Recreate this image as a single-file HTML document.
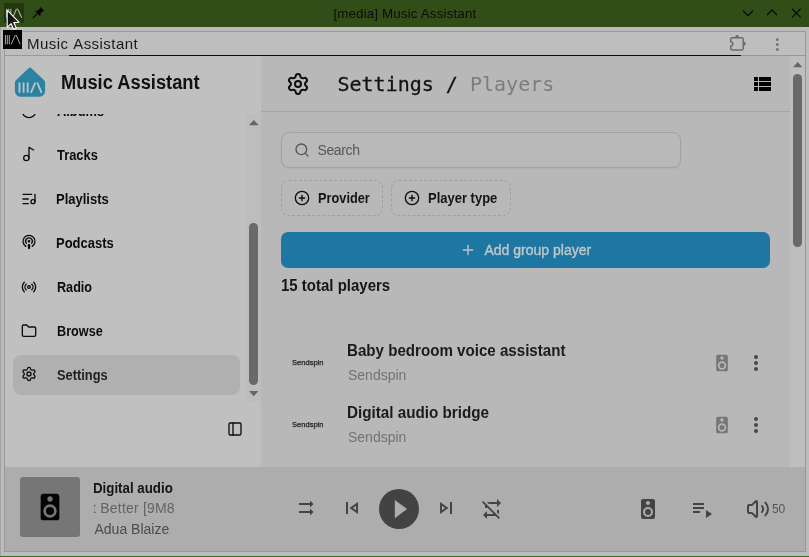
<!DOCTYPE html>
<html lang="en">
<head>
<meta charset="utf-8">
<title>[media] Music Assistant</title>
<style>
*{box-sizing:border-box;margin:0;padding:0}
html,body{width:809px;height:557px;overflow:hidden;background:#bcbcbc}
body{position:relative;font-family:"Liberation Sans",sans-serif;color:#151515}
#root{position:absolute;left:0;top:0;width:809px;height:557px;overflow:hidden;will-change:transform}
.abs{position:absolute}
.t{position:absolute;white-space:pre;line-height:20px}
svg{position:absolute;overflow:visible}
.lu{fill:none;stroke:#0d0d0d;stroke-width:2;stroke-linecap:round;stroke-linejoin:round}
.md{-webkit-text-stroke:0.35px currentColor}
/* title bar */
#titlebar{left:0;top:0;width:809px;height:27px;background:#314d18}
/* window frame */
#frameL{left:0;top:27px;width:1px;height:530px;background:#a2a0a0}
#frame{left:4px;top:31px;width:802px;height:521px;border:1px solid #9b9797}
#toolbar{left:5px;top:32px;width:800px;height:23px;background:#bebebe}
#tbline{left:5px;top:55px;width:800px;height:1px;background:#9b9797}
#tbblack{left:69px;top:54.6px;width:672px;height:1.5px;background:#0c0c0c}
#green{left:0;top:555.6px;width:809px;height:1.4px;background:#3f6a1e}
/* app */
#sidebar{left:5px;top:56px;width:256px;height:411px;background:#c0c0c0}
#main{left:261px;top:56px;width:529px;height:411px;background:#b8b8b8}
#mscroll{left:790px;top:56px;width:15px;height:411px;background:#bebebe}
#player{left:5px;top:467px;width:800px;height:84px;background:#adadad}
.nav{position:absolute;left:57px;font-size:14px;line-height:20px;white-space:pre}
.nb{font-weight:700;font-size:15px;color:#0c0c0c}
.sx{transform-origin:0 50%}
</style>
</head>
<body>
<div id="root">
<!-- ===== title bar ===== -->
<div id="titlebar" class="abs"></div>
<div class="abs" style="left:4px;top:3px;width:20px;height:20px;background:#223711"></div>
<svg style="left:4px;top:3px" width="20" height="20" viewBox="0 0 20 20"><g stroke="#a5b796" stroke-width="1.100" fill="none"><path d="M2.600 5.800v9M4.700 5.800v9M6.800 5.800v9M8.700 14.800l3.800-9M13.500 5.800l4.300 9"/></g></svg>
<svg style="left:32px;top:6px" width="13" height="13" viewBox="0 0 13 13"><g fill="#050505" stroke="none"><path d="M8.3 0.9l3.8 3.8-1 .9-.5-.3-2.2 2.2.4 1.5-.9.9L3.3 5.300l.9-.9 1.500.4 2.200-2.200-.3-.5z"/><path d="M4.9 7.300l.8.8-4.300 4.300-.8-.8z"/></g></svg>
<div class="t" id="wtitle" style="left:333.400px;top:4px;font-size:13.33px;letter-spacing:0.16px;color:#0b0d08">[media] Music Assistant</div>
<svg style="left:740px;top:5px" width="66" height="17" viewBox="740 5 66 17"><g fill="none" stroke="#080a06" stroke-width="1.25"><path d="M743 10.700l5 5 5-5"/><path d="M767 15l5-5 5 5"/><path d="M792 8.800l8.600 8.600M800.600 8.800l-8.600 8.600"/></g></svg>

<!-- ===== window frame + toolbar ===== -->
<div id="frameL" class="abs"></div>
<div id="frame" class="abs"></div>
<div id="toolbar" class="abs"></div>
<div id="tbline" class="abs"></div>
<div id="tbblack" class="abs"></div>
<div id="green" class="abs"></div>
<div class="abs" style="left:3px;top:30px;width:19px;height:19px;background:#000"></div>
<svg style="left:3px;top:30px" width="19" height="19" viewBox="0 0 19 19"><g stroke="#d8d8d8" stroke-width="0.8" fill="none"><path d="M2.400 5v9.300M4.300 5v9.300M6.300 5v9.300M8.100 14.300l4.300-9.300M13.100 5l4 9.300"/></g></svg>
<div class="t" id="tbtitle" style="left:27px;top:33.500px;font-size:15px;letter-spacing:0.45px;word-spacing:1px;color:#1c1c1c">Music Assistant</div>
<svg style="left:728px;top:34px" width="20" height="18" viewBox="728 34 20 18"><path d="M732.200 37.700H741.700a1.500 1.500 0 0 1 1.500 1.500V48.500a1.500 1.500 0 0 1-1.500 1.500H732.200a1.500 1.500 0 0 1-1.500-1.500V45.900a2.100 2.100 0 0 0 0-4.200V39.200a1.500 1.500 0 0 1 1.500-1.500z" fill="none" stroke="#6b6b6b" stroke-width="1.500" stroke-linejoin="round"/><path d="M735.200 37.500a1.900 2.400 0 0 1 3.800 0zM743.500 41.800a2.300 2 0 0 1 0 4z" fill="#6b6b6b"/></svg>
<svg style="left:774px;top:36px" width="6" height="16" viewBox="774 36 6 16"><g fill="#757575"><circle cx="777.300" cy="39.500" r="1.500"/><circle cx="777.300" cy="44.500" r="1.500"/><circle cx="777.300" cy="49.500" r="1.500"/></g></svg>

<!-- ===== panels ===== -->
<div id="sidebar" class="abs"></div>
<div id="main" class="abs"></div>
<div id="mscroll" class="abs"></div>
<div id="player" class="abs"></div>

<!-- ===== sidebar ===== -->
<svg style="left:14px;top:66px" width="32" height="32" viewBox="14 66 32 32"><path d="M28.600 68.200a2 2 0 0 1 2.800 0l12.500 11.800a4 4 0 0 1 1.200 2.900v8.300a5.500 5.500 0 0 1-5.500 5.500h-19.200a5.500 5.500 0 0 1-5.500-5.500v-8.300a4 4 0 0 1 1.200-2.900z" fill="#2c83a1"/><g stroke="#bcc6ca" stroke-width="1.800" fill="none"><path d="M19.500 82.500v10.300M23.600 82.500v10.300M27.700 82.500v10.300M30.900 92.800l4.400-10.300M37.200 82.500l4.400 10.300"/></g></svg>
<div class="t sx" id="sbtitle" style="left:60.500px;top:71.900px;font-size:20px;font-weight:700;transform:scaleX(0.915);color:#111">Music Assistant</div>

<div class="abs" id="sbscroll" style="left:5px;top:111px;width:256px;height:291px;overflow:hidden;clip-path:inset(3px 0 0 0)">
  <div class="abs" style="left:241px;top:3px;width:15px;height:288px;background:#bdbdbd"></div>
  <svg style="left:243.500px;top:8.800px" width="10" height="6" viewBox="0 0 10 6"><path d="M0 5.300L4.800 0l4.800 5.300z" fill="#666"/></svg>
  <div class="abs" style="left:244px;top:112px;width:9px;height:162px;border-radius:4.500px;background:#696969"></div>
  <svg style="left:243.800px;top:279.800px" width="10" height="6" viewBox="0 0 10 6"><path d="M0 0h9.400L4.700 5.200z" fill="#666"/></svg>
  <div class="abs" style="left:8px;top:244px;width:227px;height:40px;border-radius:8px;background:#b0b0b0"></div>
  <!-- albums (clipped) -->
  <svg style="left:16.200px;top:-8.400px" width="16" height="16" viewBox="0 0 24 24" class="lu"><circle cx="12" cy="12" r="10"/><circle cx="12" cy="12" r="2"/></svg>
  <div class="nav nb sx" style="top:-10px;left:52px;transform:scaleX(0.855)">Albums</div>
  <!-- tracks -->
  <svg style="left:16.200px;top:35.400px" width="16" height="16" viewBox="0 0 24 24" class="lu"><circle cx="8" cy="18" r="4"/><path d="M12 18V2l7 4"/></svg>
  <div class="nav nb sx" style="top:34px;left:52px;transform:scaleX(0.860)">Tracks</div>
  <!-- playlists -->
  <svg style="left:16.200px;top:79.500px" width="16" height="16" viewBox="0 0 24 24" class="lu"><path d="M16 5H3"/><path d="M11 12H3"/><path d="M11 19H3"/><path d="M21 16V5"/><circle cx="18" cy="16" r="3"/></svg>
  <div class="nav nb sx" style="top:78px;left:51.300px;transform:scaleX(0.866)">Playlists</div>
  <!-- podcasts -->
  <svg style="left:16.200px;top:123.400px" width="16" height="16" viewBox="0 0 24 24" class="lu"><path d="M16.850 18.580a9 9 0 1 0-9.700 0"/><path d="M8 14a5 5 0 1 1 8 0"/><circle cx="12" cy="11" r="1"/><path d="M13 17a1 1 0 1 0-2 0l.5 4.500a.5.5 0 1 0 1 0Z"/></svg>
  <div class="nav nb sx" style="top:122px;left:51.300px;transform:scaleX(0.866)">Podcasts</div>
  <!-- radio -->
  <svg style="left:16.200px;top:167.500px" width="16" height="16" viewBox="0 0 24 24" class="lu"><path d="M16.247 7.761a6 6 0 0 1 0 8.478"/><path d="M19.075 4.933a10 10 0 0 1 0 14.134"/><path d="M4.925 19.067a10 10 0 0 1 0-14.134"/><path d="M7.753 16.239a6 6 0 0 1 0-8.478"/><circle cx="12" cy="12" r="2"/></svg>
  <div class="nav nb sx" style="top:166px;left:52px;transform:scaleX(0.842)">Radio</div>
  <!-- browse -->
  <svg style="left:16.200px;top:211.500px" width="16" height="16" viewBox="0 0 24 24" class="lu"><path d="M20 20a2 2 0 0 0 2-2V8a2 2 0 0 0-2-2h-7.900a2 2 0 0 1-1.690-.9L9.600 3.900A2 2 0 0 0 7.930 3H4a2 2 0 0 0-2 2v13a2 2 0 0 0 2 2Z"/></svg>
  <div class="nav nb sx" style="top:210px;left:52px;transform:scaleX(0.845)">Browse</div>
  <!-- settings -->
  <svg style="left:16.200px;top:255px" width="16" height="16" viewBox="0 0 24 24" class="lu"><path d="M9.671 4.136a2.340 2.340 0 0 1 4.659 0 2.340 2.340 0 0 0 3.319 1.915 2.340 2.340 0 0 1 2.330 4.033 2.340 2.340 0 0 0 0 3.831 2.340 2.340 0 0 1-2.330 4.033 2.340 2.340 0 0 0-3.319 1.915 2.340 2.340 0 0 1-4.659 0 2.340 2.340 0 0 0-3.320-1.915 2.340 2.340 0 0 1-2.330-4.033 2.340 2.340 0 0 0 0-3.831A2.340 2.340 0 0 1 6.350 6.051a2.340 2.340 0 0 0 3.319-1.915"/><circle cx="12" cy="12" r="3"/></svg>
  <div class="nav sx" style="top:254px;left:51.500px;font-weight:700;font-size:14.500px;color:#1e1e1e;transform:scaleX(0.885)">Settings</div>
</div>
<svg style="left:227px;top:421px" width="16" height="16" viewBox="0 0 24 24" class="lu"><rect width="18" height="18" x="3" y="3" rx="2"/><path d="M9 3v18"/></svg>

<!-- ===== main header ===== -->
<svg style="left:286px;top:72px" width="24" height="24" viewBox="0 0 24 24" class="lu"><path d="M9.671 4.136a2.340 2.340 0 0 1 4.659 0 2.340 2.340 0 0 0 3.319 1.915 2.340 2.340 0 0 1 2.330 4.033 2.340 2.340 0 0 0 0 3.831 2.340 2.340 0 0 1-2.330 4.033 2.340 2.340 0 0 0-3.319 1.915 2.340 2.340 0 0 1-4.659 0 2.340 2.340 0 0 0-3.320-1.915 2.340 2.340 0 0 1-2.330-4.033 2.340 2.340 0 0 0 0-3.831A2.340 2.340 0 0 1 6.350 6.051a2.340 2.340 0 0 0 3.319-1.915"/><circle cx="12" cy="12" r="3"/></svg>
<div class="t" id="crumb" style="left:337.500px;top:72px;font-family:'DejaVu Sans Mono','Liberation Mono',monospace;font-size:20px;line-height:24px;letter-spacing:0;color:#121212"><span style="-webkit-text-stroke:0.3px #121212">Settings /</span> <span style="color:#7c7c7c">Players</span></div>
<svg style="left:750px;top:72px" width="24" height="24" viewBox="0 0 24 24"><path fill="#050505" d="M9,5V9H21V5M9,19H21V15H9M9,14H21V10H9M4,9H8V5H4M4,19H8V15H4M4,14H8V10H4V14Z"/></svg>
<div class="abs" style="left:261px;top:111px;width:529px;height:1px;background:#a6a6a6"></div>
<!-- main scrollbar -->
<svg style="left:792.700px;top:62px" width="10" height="6" viewBox="0 0 10 6"><path d="M0 5.200L4.700 0l4.700 5.200z" fill="#666"/></svg>
<div class="abs" style="left:793px;top:74px;width:9px;height:173px;border-radius:4.500px;background:#696969"></div>

<!-- search -->
<div class="abs" style="left:281px;top:132px;width:400px;height:36px;border:1px solid #a3a3a3;border-radius:8px;background:#b9b9b9;box-shadow:0 1px 2px rgba(0,0,0,0.05)"></div>
<svg style="left:294px;top:142px" width="16" height="16" viewBox="0 0 24 24" class="lu" stroke="#555"><g stroke="#555"><path d="m21 21-4.340-4.340"/><circle cx="11" cy="11" r="8"/></g></svg>
<div class="t" style="left:317.500px;top:140px;font-size:14px;letter-spacing:-0.38px;color:#575757">Search</div>
<!-- chips -->
<div class="abs" style="left:281px;top:180px;width:102px;height:36px;border:1px dashed #a0a0a0;border-radius:8px"></div>
<svg style="left:294px;top:190px" width="16" height="16" viewBox="0 0 24 24" class="lu"><circle cx="12" cy="12" r="10"/><path d="M8 12h8"/><path d="M12 8v8"/></svg>
<div class="t sx" style="left:318px;top:187.800px;font-size:14.500px;font-weight:700;transform:scaleX(0.881)">Provider</div>
<div class="abs" style="left:391px;top:180px;width:120px;height:36px;border:1px dashed #a0a0a0;border-radius:8px"></div>
<svg style="left:404px;top:190px" width="16" height="16" viewBox="0 0 24 24" class="lu"><circle cx="12" cy="12" r="10"/><path d="M8 12h8"/><path d="M12 8v8"/></svg>
<div class="t sx" style="left:428.100px;top:187.800px;font-size:14.500px;font-weight:700;transform:scaleX(0.896)">Player type</div>
<!-- add button -->
<div class="abs" style="left:281px;top:232px;width:489px;height:36px;border-radius:7px;background:#1e76a3"></div>
<svg style="left:460px;top:242px" width="16" height="16" viewBox="0 0 24 24" class="lu"><g stroke="#bcc6cb"><path d="M5 12h14"/><path d="M12 5v14"/></g></svg>
<div class="t md" style="left:484.500px;top:240px;font-size:14px;color:#bfc8cc">Add group player</div>
<div class="t sx" style="left:281.100px;top:275.500px;font-size:16px;font-weight:700;transform:scaleX(0.937)">15 total players</div>

<!-- rows -->
<div class="t sx" style="left:292px;top:352.700px;font-size:7.5px;letter-spacing:0.03px;-webkit-text-stroke:0.25px #222;color:#222">Sendspin</div>
<div class="t sx" style="left:346.800px;top:340.500px;font-size:16px;font-weight:700;transform:scaleX(0.945);color:#1b1b1b">Baby bedroom voice assistant</div>
<div class="t" style="left:348px;top:365px;font-size:14px;color:#737373">Sendspin</div>
<svg style="left:712px;top:352.500px" width="20" height="20" viewBox="0 0 24 24"><path fill="#777" d="M12,12A3,3 0 0,0 9,15A3,3 0 0,0 12,18A3,3 0 0,0 15,15A3,3 0 0,0 12,12M12,20A5,5 0 0,1 7,15A5,5 0 0,1 12,10A5,5 0 0,1 17,15A5,5 0 0,1 12,20M12,4A2,2 0 0,1 14,6A2,2 0 0,1 12,8C10.890,8 10,7.100 10,6C10,4.890 10.890,4 12,4M17,2H7C5.890,2 5,2.890 5,4V20A2,2 0 0,0 7,22H17A2,2 0 0,0 19,20V4C19,2.890 18.100,2 17,2Z"/></svg>
<svg style="left:744px;top:351px" width="24" height="24" viewBox="0 0 24 24"><g fill="#474747"><circle cx="12" cy="6" r="2"/><circle cx="12" cy="12" r="2"/><circle cx="12" cy="18" r="2"/></g></svg>

<div class="t sx" style="left:292px;top:414.700px;font-size:7.5px;letter-spacing:0.03px;-webkit-text-stroke:0.25px #222;color:#222">Sendspin</div>
<div class="t sx" style="left:346.800px;top:402.500px;font-size:16px;font-weight:700;transform:scaleX(0.951);color:#1b1b1b">Digital audio bridge</div>
<div class="t" style="left:348px;top:427px;font-size:14px;color:#737373">Sendspin</div>
<svg style="left:712px;top:414.500px" width="20" height="20" viewBox="0 0 24 24"><path fill="#777" d="M12,12A3,3 0 0,0 9,15A3,3 0 0,0 12,18A3,3 0 0,0 15,15A3,3 0 0,0 12,12M12,20A5,5 0 0,1 7,15A5,5 0 0,1 12,10A5,5 0 0,1 17,15A5,5 0 0,1 12,20M12,4A2,2 0 0,1 14,6A2,2 0 0,1 12,8C10.890,8 10,7.100 10,6C10,4.890 10.890,4 12,4M17,2H7C5.890,2 5,2.890 5,4V20A2,2 0 0,0 7,22H17A2,2 0 0,0 19,20V4C19,2.890 18.100,2 17,2Z"/></svg>
<svg style="left:744px;top:413px" width="24" height="24" viewBox="0 0 24 24"><g fill="#474747"><circle cx="12" cy="6" r="2"/><circle cx="12" cy="12" r="2"/><circle cx="12" cy="18" r="2"/></g></svg>

<!-- ===== player bar ===== -->
<div class="abs" style="left:20px;top:477px;width:60px;height:60px;border-radius:3px;background:#767676"></div>
<svg style="left:34px;top:490.500px" width="32" height="32" viewBox="0 0 24 24"><path fill="#050505" d="M12,12A3,3 0 0,0 9,15A3,3 0 0,0 12,18A3,3 0 0,0 15,15A3,3 0 0,0 12,12M12,20A5,5 0 0,1 7,15A5,5 0 0,1 12,10A5,5 0 0,1 17,15A5,5 0 0,1 12,20M12,4A2,2 0 0,1 14,6A2,2 0 0,1 12,8C10.890,8 10,7.100 10,6C10,4.890 10.890,4 12,4M17,2H7C5.890,2 5,2.890 5,4V20A2,2 0 0,0 7,22H17A2,2 0 0,0 19,20V4C19,2.890 18.100,2 17,2Z"/></svg>
<div class="abs" style="left:94px;top:477px;width:80px;height:64px;overflow:hidden">
  <div class="t sx" style="left:-0.600px;top:0.800px;font-size:14.500px;font-weight:700;transform:scaleX(0.917);color:#141414">Digital audio</div>
  <div class="t" style="left:-1.900px;top:21px;font-size:14px;letter-spacing:0.2px;color:#636363">t Better [9M8</div>
  <div class="t" style="left:0.500px;top:41.500px;font-size:14px;color:#4c4c4c">Adua Blaize</div>
</div>
<svg style="left:294.200px;top:496px" width="24" height="24" viewBox="0 0 24 24"><path fill="#444" d="M16,4.500V7H5V9H16V11.500L19.500,8L16,4.500M16,12.500V15H5V17H16V19.500L19.500,16L16,12.500Z"/></svg>
<svg style="left:340px;top:496px" width="24" height="24" viewBox="0 0 24 24"><path fill="#444" d="M6,6H8V18H6M9.500,12L18,18V6M16,14.140L12.970,12L16,9.860V14.140Z"/></svg>
<div class="abs" style="left:379px;top:489px;width:40px;height:40px;border-radius:50%;background:#434343"></div>
<svg style="left:384px;top:494px" width="30" height="30" viewBox="384 494 30 30"><path fill="#adadad" d="M394.800 500v18.200l12.300-9.100z"/></svg>
<svg style="left:434px;top:496.200px" width="24" height="24" viewBox="0 0 24 24"><path fill="#444" d="M6,18L14.500,12L6,6M8,9.860L11.030,12L8,14.140M16,6H18V18H16"/></svg>
<svg style="left:480px;top:496.500px" width="24" height="24" viewBox="0 0 24 24"><path fill="#444" d="M2,5.270L3.280,4L20,20.720L18.730,22L15.730,19H7V22L3,18L7,14V17H13.730L7,10.270V11H5V8.270L2,5.270M17,13H19V17.180L17,15.180V13M17,5V2L21,6L17,10V7H8.820L6.820,5H17Z"/></svg>
<svg style="left:636px;top:497px" width="24" height="24" viewBox="0 0 24 24"><path fill="#444" d="M12,12A3,3 0 0,0 9,15A3,3 0 0,0 12,18A3,3 0 0,0 15,15A3,3 0 0,0 12,12M12,20A5,5 0 0,1 7,15A5,5 0 0,1 12,10A5,5 0 0,1 17,15A5,5 0 0,1 12,20M12,4A2,2 0 0,1 14,6A2,2 0 0,1 12,8C10.890,8 10,7.100 10,6C10,4.890 10.890,4 12,4M17,2H7C5.890,2 5,2.890 5,4V20A2,2 0 0,0 7,22H17A2,2 0 0,0 19,20V4C19,2.890 18.100,2 17,2Z"/></svg>
<svg style="left:690px;top:497px" width="24" height="24" viewBox="0 0 24 24"><path fill="#444" d="M3 10h11v2H3zm0-4h11v2H3zm0 8h7v2H3zm13-1v8l6-4z"/></svg>
<svg style="left:746px;top:496.800px" width="24" height="24" viewBox="0 0 24 24" class="lu"><g stroke="#444"><path d="M11 4.702a.705.705 0 0 0-1.203-.498L6.413 7.587A1.400 1.400 0 0 1 5.416 8H3a1 1 0 0 0-1 1v6a1 1 0 0 0 1 1h2.416a1.400 1.400 0 0 1 .997.413l3.383 3.384A.705.705 0 0 0 11 19.298z"/><path d="M16 9a5 5 0 0 1 0 6"/><path d="M19.364 18.364a9 9 0 0 0 0-12.728"/></g></svg>
<div class="t" style="left:772px;top:498.500px;font-size:12px;letter-spacing:-0.23px;color:#555">50</div>

<!-- mouse cursor -->
<svg style="left:0;top:0" width="30" height="34" viewBox="0 0 30 34"><defs><linearGradient id="cg" x1="0" y1="0" x2="1" y2="1"><stop offset="0" stop-color="#000"/><stop offset="1" stop-color="#333"/></linearGradient></defs><path d="M7.200 10.300v17l3.900-3.600 2.500 5.500 2.700-1.200-2.500-5.400 5.200-.4z" fill="url(#cg)" stroke="#fff" stroke-width="1.100" stroke-linejoin="round"/></svg>
</div>
</body>
</html>
